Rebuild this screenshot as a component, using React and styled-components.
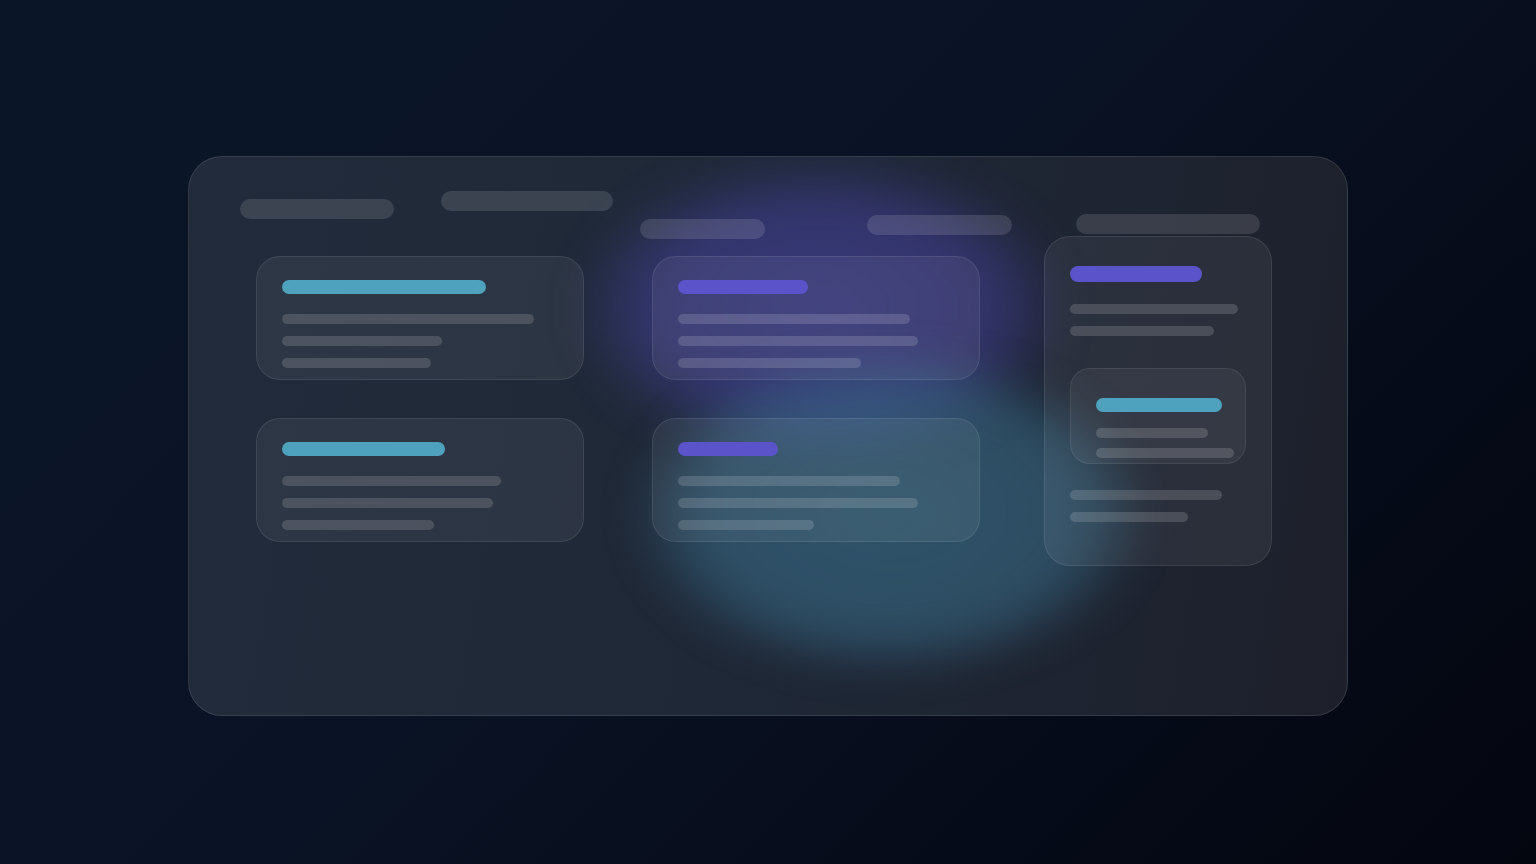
import styled, { createGlobalStyle } from 'styled-components';

const columns = [
  {
    top: 0,
    pills: [
      { w: 154, ml: 0, mt: 8 },
      { w: 172, ml: 47, mt: 0 },
    ],
    headGap: 37,
    cardLeft: 16,
    cards: [
      { accent: 'teal', bar: 204, lines: [252, 160, 149] },
      { accent: 'teal', bar: 163, lines: [219, 211, 152] },
    ],
  },
  {
    top: 24,
    pills: [
      { w: 125, ml: 0, mt: 4 },
      { w: 145, ml: 102, mt: 0 },
    ],
    headGap: 17,
    cardLeft: 12,
    cards: [
      { accent: 'purple', bar: 130, lines: [232, 240, 183] },
      { accent: 'purple', bar: 100, lines: [222, 240, 136] },
    ],
  },
];

function App() {
  return (
    <>
      <GlobalStyle />
      <Page>
        <Panel>
          <PurpleGlow />
          <TealGlow />

          {columns.map((col, i) => (
            <Column key={i} $top={col.top}>
              <PillRow>
                {col.pills.map((p, j) => (
                  <HeaderPill key={j} $w={p.w} $ml={p.ml} $mt={p.mt} />
                ))}
              </PillRow>
              <CardStack $gap={col.headGap} $left={col.cardLeft}>
                {col.cards.map((c, j) => (
                  <Card key={j}>
                    <AccentBar $w={c.bar} $accent={c.accent} />
                    <Lines>
                      {c.lines.map((w, k) => (
                        <Line key={k} $w={w} />
                      ))}
                    </Lines>
                  </Card>
                ))}
              </CardStack>
            </Column>
          ))}

          <Column $top={23}>
            <PillRow>
              <HeaderPill $w={184} $ml={32} $mt={0} />
            </PillRow>
            <TallCard>
              <AccentBar $w={132} $h={16} $accent="purple" />
              <Lines $mt={22}>
                <Line $w={168} />
                <Line $w={144} />
              </Lines>
              <InnerCard>
                <AccentBar $w={126} $accent="teal" />
                <Lines $mt={16} $gap={10}>
                  <Line $w={112} />
                  <Line $w={138} />
                </Lines>
              </InnerCard>
              <Lines $mt={26}>
                <Line $w={152} />
                <Line $w={118} />
              </Lines>
            </TallCard>
          </Column>
        </Panel>
      </Page>
    </>
  );
}

const GlobalStyle = createGlobalStyle`
  * {
    box-sizing: border-box;
  }

  html,
  body {
    margin: 0;
    padding: 0;
    font-family: Inter, 'Liberation Sans', sans-serif;
  }
`;

const Page = styled.div`
  width: 100%;
  height: 864px;
  display: flex;
  align-items: flex-start;
  justify-content: center;
  padding-top: 156px;
  background: linear-gradient(135deg, #0a1627 0%, #0a1325 45%, #060b19 75%, #03060f 100%);
  overflow: hidden;
`;

const Panel = styled.div`
  position: relative;
  width: 1160px;
  height: 560px;
  display: flex;
  align-items: flex-start;
  padding: 34px 0 0 51px;
  border: 1px solid rgba(255, 255, 255, 0.1);
  border-radius: 34px;
  background: linear-gradient(100deg, #212b3b 0%, #1f2837 50%, #1d202b 100%);
  overflow: hidden;
  isolation: isolate;
`;

const PurpleGlow = styled.div`
  position: absolute;
  left: 392px;
  top: 6px;
  width: 480px;
  height: 290px;
  border-radius: 50%;
  background: radial-gradient(
    ellipse at center,
    rgba(84, 76, 190, 0.5) 0%,
    rgba(80, 72, 184, 0.42) 50%,
    rgba(70, 64, 160, 0) 74%
  );
  filter: blur(20px);
  z-index: -1;
`;

const TealGlow = styled.div`
  position: absolute;
  left: 446px;
  top: 196px;
  width: 510px;
  height: 320px;
  border-radius: 50%;
  background: radial-gradient(
    ellipse at center,
    rgba(62, 122, 152, 0.55) 0%,
    rgba(60, 116, 146, 0.5) 52%,
    rgba(50, 100, 130, 0) 74%
  );
  filter: blur(18px);
  z-index: -1;
`;

const Column = styled.div`
  display: flex;
  flex-direction: column;
  margin-top: ${(p) => p.$top}px;
  margin-right: 27px;

  &:last-child {
    margin-right: 0;
    margin-left: 5px;
  }
`;

const PillRow = styled.div`
  display: flex;
  align-items: flex-start;
`;

const HeaderPill = styled.div`
  width: ${(p) => p.$w}px;
  height: 20px;
  margin-left: ${(p) => p.$ml}px;
  margin-top: ${(p) => p.$mt}px;
  border-radius: 10px;
  background: rgba(255, 255, 255, 0.12);
`;

const CardStack = styled.div`
  display: flex;
  flex-direction: column;
  gap: 38px;
  margin-top: ${(p) => p.$gap}px;
  margin-left: ${(p) => p.$left}px;
`;

const Card = styled.div`
  width: 328px;
  height: 124px;
  padding: 23px 25px;
  border: 1px solid rgba(255, 255, 255, 0.09);
  border-radius: 24px;
  background: rgba(255, 255, 255, 0.06);
`;

const AccentBar = styled.div`
  width: ${(p) => p.$w}px;
  height: ${(p) => p.$h || 14}px;
  border-radius: 8px;
  background: ${(p) => (p.$accent === 'teal' ? '#4fa2be' : '#5a53c9')};
`;

const Lines = styled.div`
  display: flex;
  flex-direction: column;
  gap: ${(p) => p.$gap || 12}px;
  margin-top: ${(p) => p.$mt || 20}px;
`;

const Line = styled.div`
  width: ${(p) => p.$w}px;
  height: 10px;
  border-radius: 5px;
  background: rgba(255, 255, 255, 0.15);
`;

const TallCard = styled.div`
  width: 228px;
  height: 330px;
  margin-top: 2px;
  padding: 29px 25px;
  border: 1px solid rgba(255, 255, 255, 0.09);
  border-radius: 26px;
  background: rgba(255, 255, 255, 0.06);
`;

const InnerCard = styled.div`
  width: 176px;
  height: 96px;
  margin-top: 32px;
  padding: 29px 25px;
  border: 1px solid rgba(255, 255, 255, 0.08);
  border-radius: 20px;
  background: rgba(255, 255, 255, 0.05);
`;

export default App;
